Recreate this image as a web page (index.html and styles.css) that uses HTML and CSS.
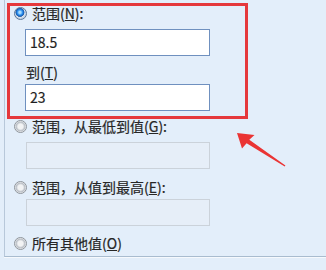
FILE: index.html
```html
<!DOCTYPE html>
<html lang="zh-CN">
<head>
<meta charset="utf-8">
<link rel="stylesheet" href="styles.css">
</head>
<body>
<div class="group">
  <div class="highlight">
    <div class="opt inner"><span class="radio on"></span><span class="lbl">范围(<u>N</u>):</span></div>
    <div class="field first">18.5</div>
    <div class="sub">到(<u>T</u>)</div>
    <div class="field second">23</div>
  </div>
  <div class="opt o2"><span class="radio"></span><span class="lbl">范围，从最低到值(<u>G</u>):</span></div>
  <div class="field off f3"></div>
  <div class="opt o3"><span class="radio"></span><span class="lbl">范围，从值到最高(<u>E</u>):</span></div>
  <div class="field off f4"></div>
  <div class="opt o4"><span class="radio"></span><span class="lbl">所有其他值(<u>O</u>)</span></div>
</div>
<svg class="arrow" width="326" height="270" viewBox="0 0 326 270">
  <polygon points="237,133 254.5,135 249.3,139.8 285.4,165.5 284.7,166.6 246.6,143.3 242,148.5" fill="#ea3434"/>
</svg>
</body>
</html>
```
FILE: styles.css
```css
html, body {
  margin: 0;
  padding: 0;
}
body {
  width: 326px;
  height: 270px;
  overflow: hidden;
  background: #e3eefa;
  font-family: "Noto Sans CJK SC", "Noto Sans", sans-serif;
  font-size: 14px;
  color: #262626;
  position: relative;
  -webkit-text-stroke: 0.2px #262626;
}
.group {
  margin-left: 4px;
  height: 256px;
  border-left: 1px solid #b8c8da;
  border-bottom: 1px solid #a9bccf;
  box-shadow: 0 1px 0 #f6f9fd;
  display: flex;
  flex-direction: column;
  align-items: flex-start;
}
.highlight {
  box-sizing: border-box;
  margin-left: 2px;
  margin-top: 3px;
  width: 241px;
  height: 116px;
  border: 3px solid #e5383c;
  padding: 0 0 5px 4px;
  display: flex;
  flex-direction: column;
  align-items: flex-start;
}
.opt {
  display: flex;
  align-items: center;
  gap: 5px;
  height: 15px;
  line-height: 15px;
  white-space: nowrap;
}
.o2, .o3, .o4 { padding-left: 9px; }
.o2 { height: 14px; }
.o3 { margin-top: 11px; height: 14px; }
.o4 { margin-top: 10px; }
.lbl u, .sub u {
  text-decoration: underline;
  text-underline-offset: 1px;
}
.radio {
  box-sizing: border-box;
  width: 13px;
  height: 13px;
  border-radius: 50%;
  border: 1px solid #8f959c;
  background: radial-gradient(circle at 50% 50%, #f2f3f4 0 2.6px, #cfd3d8 3.6px, #b9bec5 4.4px, #eef0f2 5.5px);
  flex: none;
}
.radio.on {
  border-color: #5a7699;
  background: radial-gradient(circle at 45% 40%, #a8dcff 0 1px, #2f92ee 2.6px, #1560bd 3.8px, #3f6fa8 4.3px, #e2ebf5 4.8px, #c9d5e3 5.5px);
}
.field {
  box-sizing: border-box;
  width: 185px;
  height: 27px;
  border: 1px solid #6f90bf;
  background: #ffffff;
  padding-left: 4px;
  line-height: 25px;
  font-size: 14px;
  color: #1f1f1f;
}
.field.first { margin-top: 8px; margin-left: 11px; }
.field.second { margin-top: 4px; margin-left: 11px; }
.sub {
  margin-top: 8px;
  margin-left: 12px;
  height: 16px;
  line-height: 16px;
}
.field.off {
  width: 184px;
  margin-left: 21px;
  border-color: #cbd2da;
  background: #e6eef8;
}
.f3 { margin-top: 9px; }
.f4 { margin-top: 5px; }
.arrow {
  position: absolute;
  left: 0;
  top: 0;
  pointer-events: none;
}
```
